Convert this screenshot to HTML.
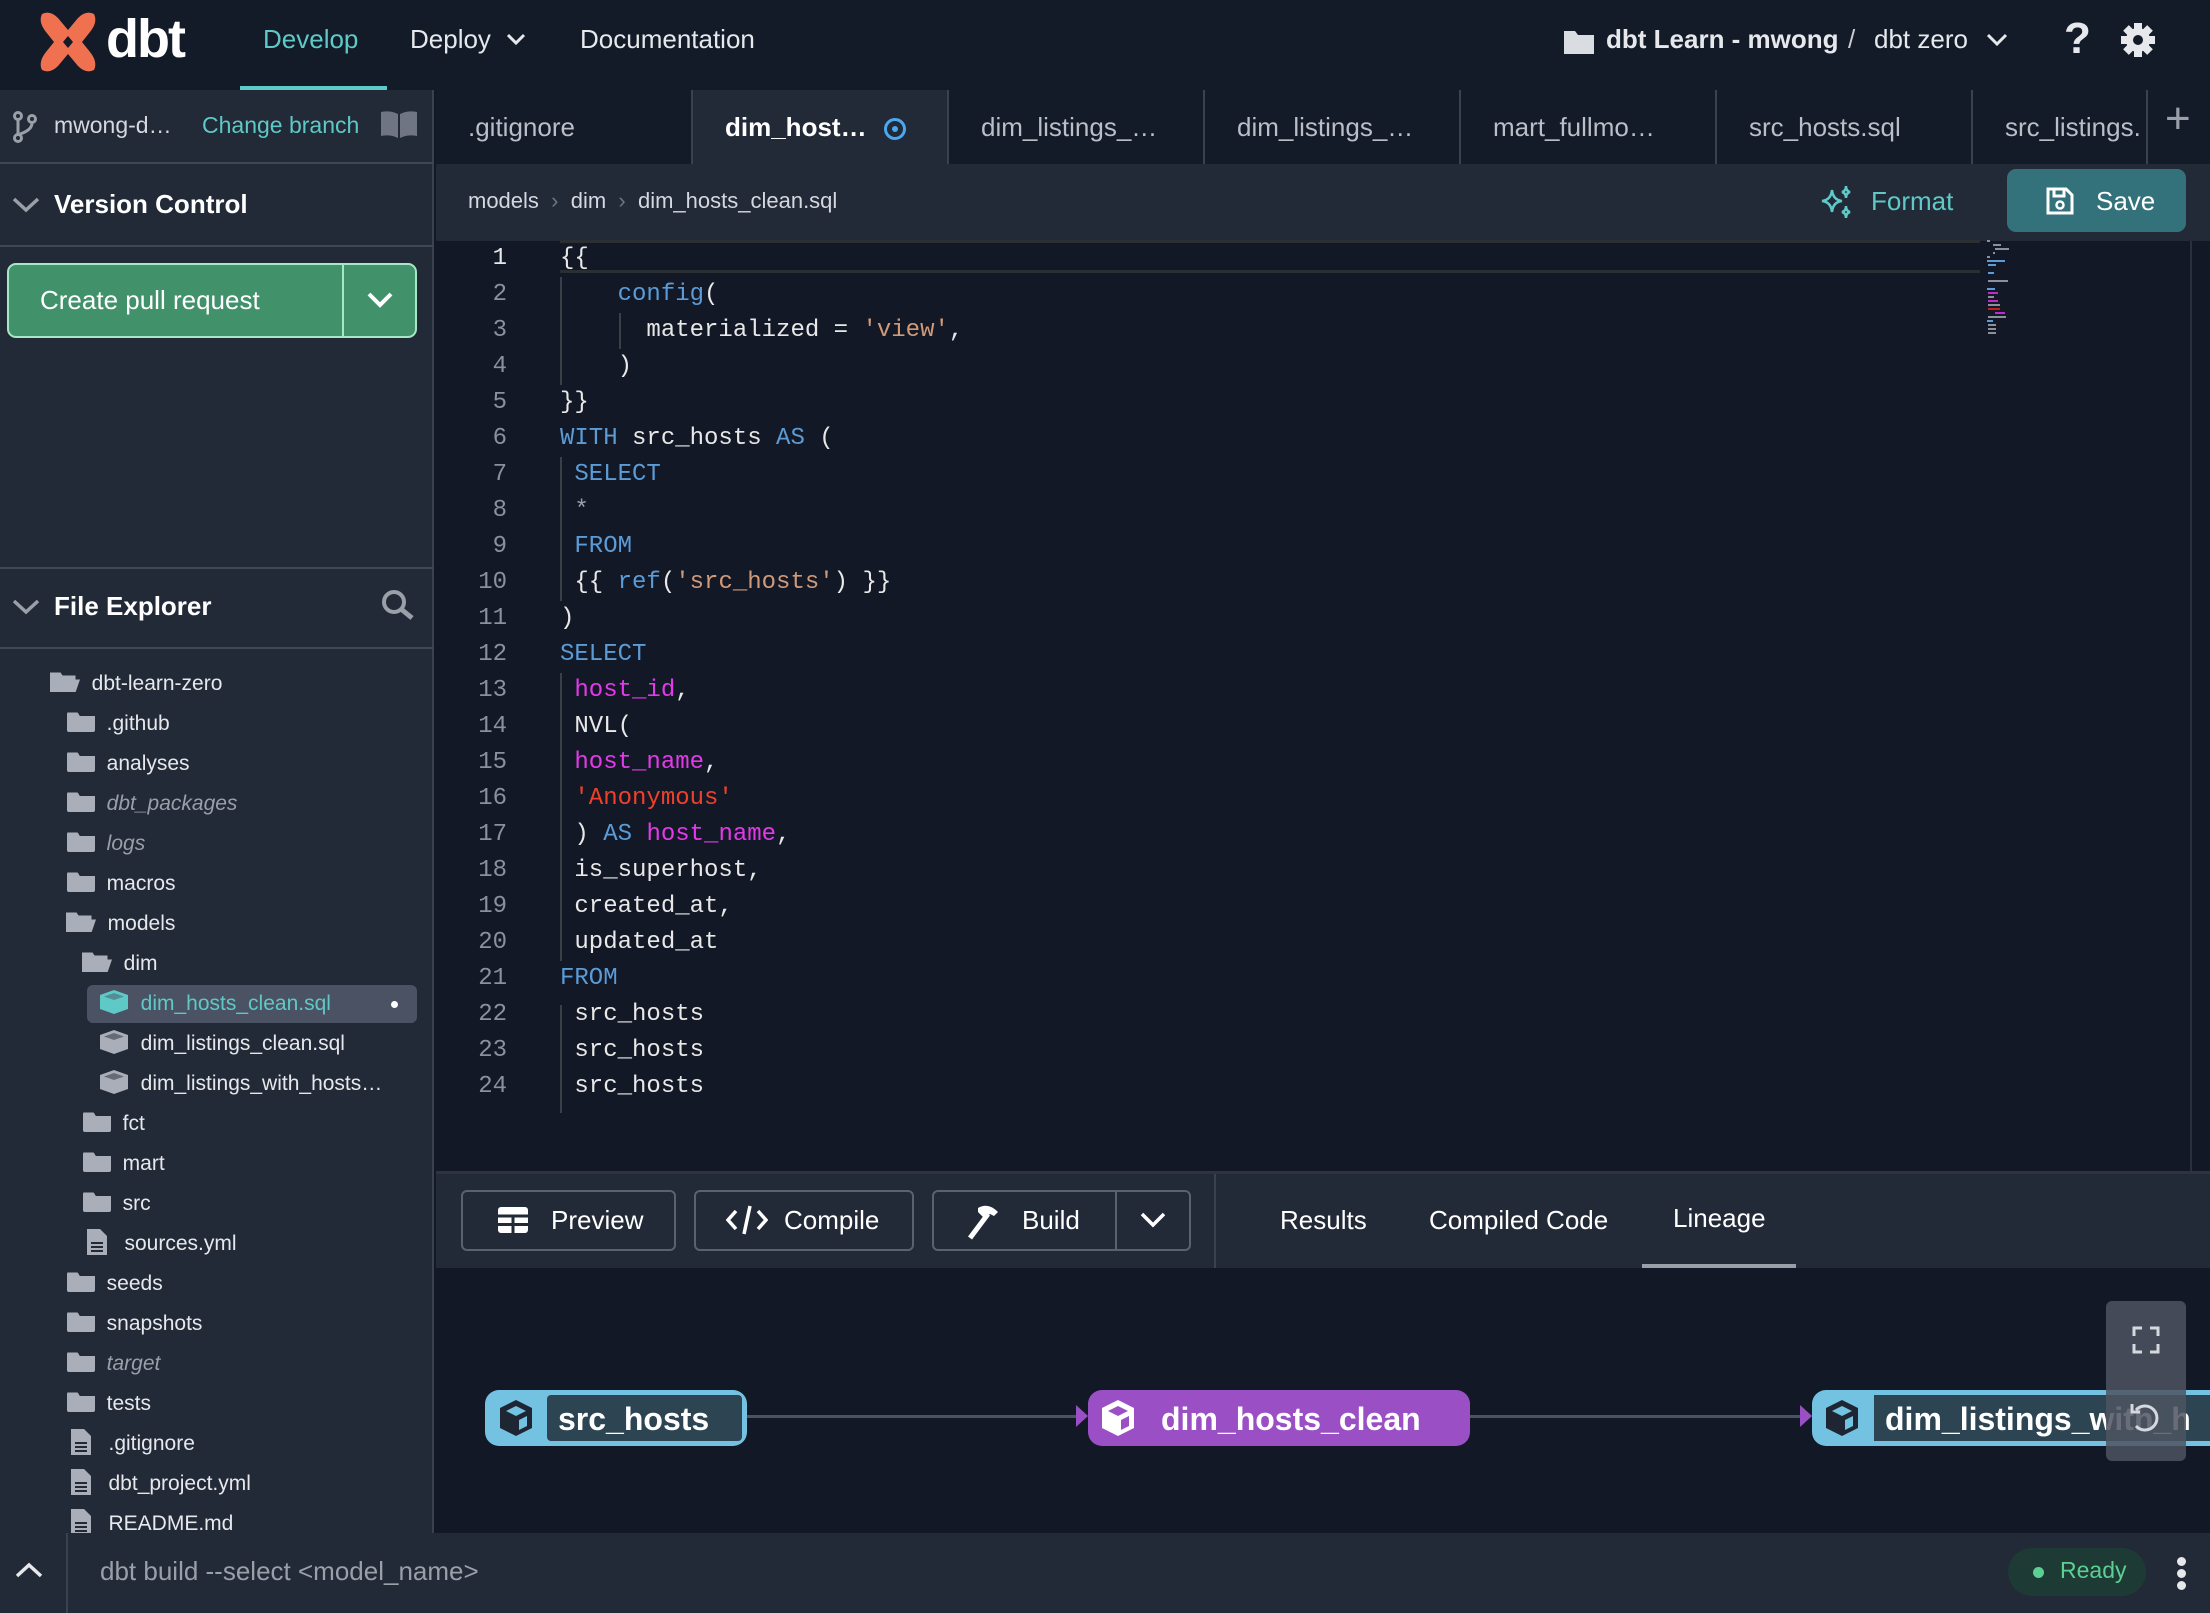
<!DOCTYPE html>
<html><head><meta charset="utf-8"><style>
*{box-sizing:border-box;margin:0;padding:0}
body{width:2210px;height:1613px;overflow:hidden;background:#131826;font-family:"Liberation Sans",sans-serif;color:#e6e8ec;position:relative}
.a{position:absolute}
.t{white-space:nowrap}
.ln{position:absolute;left:440px;width:67px;text-align:right;color:#8a909c;font-family:"Liberation Mono",monospace;font-size:24px;line-height:36px}
.cl{position:absolute;left:560px;line-height:36px;font-family:"Liberation Mono",monospace;font-size:24px;white-space:pre;color:#e8e8e8}
.k{color:#5b9bd6}.s{color:#d09a78}.p{color:#e23ae8}.r{color:#f0402a}.g{color:#9aa0a8}
.tab{position:absolute;top:90px;height:74px;width:256px;border-left:2px solid #3a4150;font-size:26px;color:#b9bec7;padding:22px 0 0 32px;white-space:nowrap;overflow:hidden}
.tr{position:absolute;font-size:21px;white-space:nowrap;color:#e6e8ec;height:40px;line-height:40px}
.fi{display:inline-block;width:28px;height:20px;background:#a9aeb8;vertical-align:middle;position:relative;top:-2px;clip-path:polygon(0 0,38% 0,46% 18%,100% 18%,100% 100%,0 100%);border-radius:2px}
.fo{display:inline-block;width:30px;height:20px;background:#a9aeb8;vertical-align:middle;position:relative;top:-2px;clip-path:polygon(0 0,35% 0,42% 15%,85% 15%,85% 35%,100% 35%,85% 100%,0 100%)}
.doc{display:inline-block;width:20px;height:26px;vertical-align:middle;position:relative;top:-2px}
.cube{display:inline-block;vertical-align:middle;position:relative;top:-2px}
.btn{position:absolute;top:1190px;height:61px;border:2px solid #5a6170;border-radius:6px;font-size:26px;color:#fff;line-height:57px}
</style></head><body>
<!-- top nav -->
<div class="a" style="left:0;top:0;width:2210px;height:90px;background:#131a28"></div>
<svg class="a" style="left:36px;top:10px" width="64" height="64" viewBox="0 0 64 64"><path d="M6 4 Q14 0 22 8 L32 20 L42 8 Q50 0 58 4 Q62 12 54 22 L46 32 L54 42 Q62 52 58 60 Q50 64 42 56 L32 44 L22 56 Q14 64 6 60 Q2 52 10 42 L18 32 L10 22 Q2 12 6 4Z" fill="#f0714f"/><path d="M32 26 L37 32 L32 38 L27 32Z" fill="#131a28"/></svg>
<div class="a t" style="left:106px;top:8px;font-size:54px;font-weight:bold;color:#fff;letter-spacing:-2px">dbt</div>
<div class="a t" style="left:263px;top:24px;font-size:26px;color:#5ec9c6">Develop</div>
<div class="a" style="left:240px;top:86px;width:147px;height:4px;background:#5ec9c6"></div>
<div class="a t" style="left:410px;top:24px;font-size:26px;color:#e6e8ec">Deploy</div>
<svg class="a" style="left:506px;top:32px" width="20" height="14"><path d="M2 3 L10 11 L18 3" stroke="#e6e8ec" stroke-width="3" fill="none"/></svg>
<div class="a t" style="left:580px;top:24px;font-size:26px;color:#e6e8ec">Documentation</div>
<svg class="a" style="left:1563px;top:27px" width="32" height="28"><path d="M1 4 h11 l3 4 h16 v19 h-30z" fill="#d9dce1"/></svg>
<div class="a t" style="left:1606px;top:24px;font-size:26px;color:#e6e8ec;font-weight:bold">dbt Learn - mwong</div>
<div class="a t" style="left:1848px;top:24px;font-size:26px;color:#c9ccd2">/</div>
<div class="a t" style="left:1874px;top:24px;font-size:26px;color:#e6e8ec">dbt zero</div>
<svg class="a" style="left:1986px;top:32px" width="22" height="16"><path d="M2 3 L11 12 L20 3" stroke="#e6e8ec" stroke-width="3" fill="none"/></svg>
<div class="a t" style="left:2064px;top:14px;font-size:44px;font-weight:bold;color:#e6e8ec">?</div>
<svg class="a" style="left:2120px;top:22px" width="36" height="36" viewBox="0 0 36 36"><g fill="#e6e8ec"><circle cx="18" cy="18" r="12"/><rect x="14" y="1" width="8" height="34"/><rect x="1" y="14" width="34" height="8"/><rect x="14" y="1" width="8" height="34" transform="rotate(45 18 18)"/><rect x="14" y="1" width="8" height="34" transform="rotate(-45 18 18)"/></g><circle cx="18" cy="18" r="5" fill="#131a28"/></svg>

<!-- sidebar -->
<div class="a" style="left:0;top:90px;width:434px;height:1443px;background:#222937;border-right:2px solid #3a4150"></div>
<svg class="a" style="left:12px;top:110px" width="26" height="34"><g stroke="#9aa0a8" stroke-width="3" fill="none"><circle cx="6" cy="6" r="3.5"/><circle cx="20" cy="9" r="3.5"/><circle cx="6" cy="28" r="3.5"/><path d="M6 10 V24 M20 13 Q20 20 8 24"/></g></svg>
<div class="a t" style="left:54px;top:112px;font-size:23px;color:#d5d8de">mwong-d…</div>
<div class="a t" style="left:202px;top:112px;font-size:23px;color:#5ec9c6">Change branch</div>
<svg class="a" style="left:380px;top:110px" width="38" height="30"><path d="M1 2 Q10 0 18 4 V28 Q10 24 1 26Z M20 4 Q28 0 37 2 V26 Q28 24 20 28Z" fill="#6f7582"/></svg>
<div class="a" style="left:0;top:162px;width:434px;height:2px;background:#3f4654"></div>
<svg class="a" style="left:12px;top:196px" width="28" height="18"><path d="M2 3 L14 14 L26 3" stroke="#9aa0a8" stroke-width="3.5" fill="none"/></svg>
<div class="a t" style="left:54px;top:189px;font-size:26px;font-weight:bold;color:#fff">Version Control</div>
<div class="a" style="left:0;top:245px;width:434px;height:2px;background:#3f4654"></div>
<div class="a" style="left:7px;top:263px;width:410px;height:75px;background:#41916a;border:2px solid #a6e8c4;border-radius:9px"></div>
<div class="a" style="left:342px;top:265px;width:2px;height:71px;background:#a6e8c4"></div>
<div class="a t" style="left:40px;top:285px;font-size:26px;color:#fff">Create pull request</div>
<svg class="a" style="left:366px;top:290px" width="28" height="20"><path d="M3 4 L14 15 L25 4" stroke="#fff" stroke-width="4" fill="none"/></svg>
<div class="a" style="left:0;top:567px;width:434px;height:2px;background:#3f4654"></div>
<svg class="a" style="left:12px;top:598px" width="28" height="18"><path d="M2 3 L14 14 L26 3" stroke="#9aa0a8" stroke-width="3.5" fill="none"/></svg>
<div class="a t" style="left:54px;top:591px;font-size:26px;font-weight:bold;color:#fff">File Explorer</div>
<svg class="a" style="left:380px;top:588px" width="36" height="34"><circle cx="14" cy="14" r="10" stroke="#9aa0a8" stroke-width="4" fill="none"/><path d="M21 21 L32 30" stroke="#9aa0a8" stroke-width="5"/></svg>
<div class="a" style="left:0;top:647px;width:434px;height:2px;background:#3f4654"></div>

<!-- tree -->
<div class="a" style="left:87px;top:985px;width:330px;height:38px;background:#4a5263;border-radius:6px"></div>
<div class="tr" style="left:50px;top:664px"><span class="fo"></span>&nbsp; dbt-learn-zero</div>
<div class="tr" style="left:67px;top:704px"><span class="fi"></span>&nbsp; .github</div>
<div class="tr" style="left:67px;top:744px"><span class="fi"></span>&nbsp; analyses</div>
<div class="tr" style="left:67px;top:784px;color:#9aa0a8;font-style:italic"><span class="fi"></span>&nbsp; dbt_packages</div>
<div class="tr" style="left:67px;top:824px;color:#9aa0a8;font-style:italic"><span class="fi"></span>&nbsp; logs</div>
<div class="tr" style="left:67px;top:864px"><span class="fi"></span>&nbsp; macros</div>
<div class="tr" style="left:66px;top:904px"><span class="fo"></span>&nbsp; models</div>
<div class="tr" style="left:82px;top:944px"><span class="fo"></span>&nbsp; dim</div>
<div class="tr" style="left:99px;top:984px;color:#5ec9c6"><svg class="cube" width="30" height="26" viewBox="0 0 30 26"><path d="M15 1 L29 6 V20 L15 25 L1 20 V6Z" fill="#5ec9c6"/><path d="M15 4 L25 7.5 L15 11 L5 7.5Z" fill="#4a5263" opacity=".5"/></svg>&nbsp; dim_hosts_clean.sql</div>
<div class="a" style="left:391px;top:1001px;width:7px;height:7px;border-radius:50%;background:#fff"></div>
<div class="tr" style="left:99px;top:1024px"><svg class="cube" width="30" height="26" viewBox="0 0 30 26"><path d="M15 1 L29 6 V20 L15 25 L1 20 V6Z" fill="#a9aeb8"/><path d="M15 4 L25 7.5 L15 11 L5 7.5Z" fill="#222937" opacity=".5"/></svg>&nbsp; dim_listings_clean.sql</div>
<div class="tr" style="left:99px;top:1064px"><svg class="cube" width="30" height="26" viewBox="0 0 30 26"><path d="M15 1 L29 6 V20 L15 25 L1 20 V6Z" fill="#a9aeb8"/><path d="M15 4 L25 7.5 L15 11 L5 7.5Z" fill="#222937" opacity=".5"/></svg>&nbsp; dim_listings_with_hosts…</div>
<div class="tr" style="left:83px;top:1104px"><span class="fi"></span>&nbsp; fct</div>
<div class="tr" style="left:83px;top:1144px"><span class="fi"></span>&nbsp; mart</div>
<div class="tr" style="left:83px;top:1184px"><span class="fi"></span>&nbsp; src</div>
<div class="tr" style="left:87px;top:1224px"><svg class="doc" viewBox="0 0 20 26"><path d="M0 0 H13 L20 7 V26 H0Z" fill="#a9aeb8"/><path d="M4 14h12M4 18h12M4 22h12" stroke="#222937" stroke-width="2"/></svg>&nbsp;&nbsp; sources.yml</div>
<div class="tr" style="left:67px;top:1264px"><span class="fi"></span>&nbsp; seeds</div>
<div class="tr" style="left:67px;top:1304px"><span class="fi"></span>&nbsp; snapshots</div>
<div class="tr" style="left:67px;top:1344px;color:#9aa0a8;font-style:italic"><span class="fi"></span>&nbsp; target</div>
<div class="tr" style="left:67px;top:1384px"><span class="fi"></span>&nbsp; tests</div>
<div class="tr" style="left:71px;top:1424px"><svg class="doc" viewBox="0 0 20 26"><path d="M0 0 H13 L20 7 V26 H0Z" fill="#a9aeb8"/><path d="M4 14h12M4 18h12M4 22h12" stroke="#222937" stroke-width="2"/></svg>&nbsp;&nbsp; .gitignore</div>
<div class="tr" style="left:71px;top:1464px"><svg class="doc" viewBox="0 0 20 26"><path d="M0 0 H13 L20 7 V26 H0Z" fill="#a9aeb8"/><path d="M4 14h12M4 18h12M4 22h12" stroke="#222937" stroke-width="2"/></svg>&nbsp;&nbsp; dbt_project.yml</div>
<div class="tr" style="left:71px;top:1504px"><svg class="doc" viewBox="0 0 20 26"><path d="M0 0 H13 L20 7 V26 H0Z" fill="#a9aeb8"/><path d="M4 14h12M4 18h12M4 22h12" stroke="#222937" stroke-width="2"/></svg>&nbsp;&nbsp; README.md</div>

<!-- tabs -->
<div class="a" style="left:436px;top:90px;width:1774px;height:74px;background:#131a28"></div>
<div class="tab" style="left:436px;border-left:none">.gitignore</div>
<div class="tab" style="left:691px;background:#222937;color:#fff;font-weight:bold">dim_host… <span style="display:inline-block;width:22px;height:22px;border:3px solid #4aa8f0;border-radius:50%;vertical-align:middle;position:relative;margin-left:10px"><span style="position:absolute;left:5px;top:5px;width:6px;height:6px;background:#4aa8f0;border-radius:50%"></span></span></div>
<div class="tab" style="left:947px">dim_listings_…</div>
<div class="tab" style="left:1203px">dim_listings_…</div>
<div class="tab" style="left:1459px">mart_fullmo…</div>
<div class="tab" style="left:1715px">src_hosts.sql</div>
<div class="tab" style="left:1971px;width:176px">src_listings.</div>
<div class="a" style="left:2146px;top:90px;width:2px;height:74px;background:#3a4150"></div>
<div class="a t" style="left:2165px;top:94px;font-size:44px;color:#9aa0a8">+</div>

<!-- breadcrumb -->
<div class="a" style="left:436px;top:164px;width:1774px;height:77px;background:#222937"></div>
<div class="a t" style="left:468px;top:188px;font-size:22px;color:#d5d8de">models <span style="color:#6f7582">&nbsp;›&nbsp;</span> dim <span style="color:#6f7582">&nbsp;›&nbsp;</span> dim_hosts_clean.sql</div>
<svg class="a" style="left:1818px;top:184px" width="36" height="36" viewBox="0 0 36 36"><path d="M14 6 Q15 16 24 17 Q15 18 14 28 Q13 18 4 17 Q13 16 14 6Z M28 2 Q28 7 32 8 Q28 9 28 14 Q28 9 24 8 Q28 7 28 2Z M28 22 Q28 27 32 28 Q28 29 28 34 Q28 29 24 28 Q28 27 28 22Z" stroke="#5ec9c6" stroke-width="2.5" fill="none"/></svg>
<div class="a t" style="left:1871px;top:186px;font-size:26px;color:#5ec9c6">Format</div>
<div class="a" style="left:2007px;top:169px;width:179px;height:63px;background:#33727a;border-radius:9px"></div>
<svg class="a" style="left:2045px;top:186px" width="30" height="30"><path d="M3 3 H21 L27 9 V27 H3Z" stroke="#fff" stroke-width="3" fill="none"/><path d="M9 3 V10 H19 V3" stroke="#fff" stroke-width="3" fill="none"/><circle cx="15" cy="19" r="3.5" stroke="#fff" stroke-width="2.5" fill="none"/></svg>
<div class="a t" style="left:2096px;top:186px;font-size:26px;color:#fff">Save</div>

<!-- editor -->
<div class="a" style="left:560px;top:240px;width:1420px;height:33px;border-top:3px solid #2b2e33;border-bottom:3px solid #2b2e33"></div>
<div class="a" style="left:2190px;top:241px;width:2px;height:930px;background:#2a303c"></div>
<div class="a" style="left:560px;top:277px;width:2px;height:108px;background:#3a3f48"></div>
<div class="a" style="left:619px;top:313px;width:2px;height:36px;background:#3a3f48"></div>
<div class="a" style="left:560px;top:457px;width:2px;height:144px;background:#3a3f48"></div>
<div class="a" style="left:560px;top:673px;width:2px;height:288px;background:#3a3f48"></div>
<div class="a" style="left:560px;top:1005px;width:2px;height:108px;background:#3a3f48"></div>

<div style="position:absolute;left:0;top:4px;width:2210px;height:1200px">
<div class="ln" style="top:237px;color:#e8e8e8">1</div><div class="cl" style="top:237px">{{</div>
<div class="ln" style="top:273px">2</div><div class="cl" style="top:273px">    <span class="k">config</span>(</div>
<div class="ln" style="top:309px">3</div><div class="cl" style="top:309px">      materialized = <span class="s">'view'</span>,</div>
<div class="ln" style="top:345px">4</div><div class="cl" style="top:345px">    )</div>
<div class="ln" style="top:381px">5</div><div class="cl" style="top:381px">}}</div>
<div class="ln" style="top:417px">6</div><div class="cl" style="top:417px"><span class="k">WITH</span> src_hosts <span class="k">AS</span> (</div>
<div class="ln" style="top:453px">7</div><div class="cl" style="top:453px"> <span class="k">SELECT</span></div>
<div class="ln" style="top:489px">8</div><div class="cl" style="top:489px"> <span class="g">*</span></div>
<div class="ln" style="top:525px">9</div><div class="cl" style="top:525px"> <span class="k">FROM</span></div>
<div class="ln" style="top:561px">10</div><div class="cl" style="top:561px"> {{ <span class="k">ref</span>(<span class="s">'src_hosts'</span>) }}</div>
<div class="ln" style="top:597px">11</div><div class="cl" style="top:597px">)</div>
<div class="ln" style="top:633px">12</div><div class="cl" style="top:633px"><span class="k">SELECT</span></div>
<div class="ln" style="top:669px">13</div><div class="cl" style="top:669px"> <span class="p">host_id</span>,</div>
<div class="ln" style="top:705px">14</div><div class="cl" style="top:705px"> NVL(</div>
<div class="ln" style="top:741px">15</div><div class="cl" style="top:741px"> <span class="p">host_name</span>,</div>
<div class="ln" style="top:777px">16</div><div class="cl" style="top:777px"> <span class="r">'Anonymous'</span></div>
<div class="ln" style="top:813px">17</div><div class="cl" style="top:813px"> ) <span class="k">AS</span> <span class="p">host_name</span>,</div>
<div class="ln" style="top:849px">18</div><div class="cl" style="top:849px"> is_superhost,</div>
<div class="ln" style="top:885px">19</div><div class="cl" style="top:885px"> created_at,</div>
<div class="ln" style="top:921px">20</div><div class="cl" style="top:921px"> updated_at</div>
<div class="ln" style="top:957px">21</div><div class="cl" style="top:957px"><span class="k">FROM</span></div>
<div class="ln" style="top:993px">22</div><div class="cl" style="top:993px"> src_hosts</div>
<div class="ln" style="top:1029px">23</div><div class="cl" style="top:1029px"> src_hosts</div>
<div class="ln" style="top:1065px">24</div><div class="cl" style="top:1065px"> src_hosts</div>
</div>
<!-- minimap -->
<svg class="a" style="left:1985px;top:238px" width="50" height="100"><g stroke-width="2"><path d="M2 3h3M8 7h8M10 11h14M8 15h2M2 19h3" stroke="#8a909c"/><path d="M2 23h18M3 27h8M3 35h6M2 51h8M2 83h6" stroke="#5b9bd6"/><path d="M3 43h20M3 59h6M3 67h12M3 79h18M3 87h8M3 91h8M3 95h8" stroke="#8a909c"/><path d="M3 55h10M3 63h10M10 75h10" stroke="#c02ac8"/><path d="M3 71h12" stroke="#c02020"/></g></svg>

<!-- toolbar -->
<div class="a" style="left:436px;top:1171px;width:1774px;height:3px;background:#2d3340"></div>
<div class="a" style="left:436px;top:1174px;width:1774px;height:94px;background:#222937"></div>
<div class="btn" style="left:461px;width:215px;padding-left:88px">Preview</div>
<svg class="a" style="left:497px;top:1206px" width="32" height="28"><rect x="1" y="1" width="30" height="26" rx="3" fill="#fff"/><path d="M1 10 H31 M16 10 V27 M1 18.5 H31" stroke="#222937" stroke-width="3"/></svg>
<div class="btn" style="left:694px;width:220px;padding-left:88px">Compile</div>
<svg class="a" style="left:726px;top:1204px" width="42" height="32"><path d="M10 7 L2 16 L10 25 M32 7 L40 16 L32 25 M24 2 L18 30" stroke="#fff" stroke-width="3.5" fill="none"/></svg>
<div class="btn" style="left:932px;width:259px;padding-left:88px">Build</div>
<div class="a" style="left:1115px;top:1192px;width:2px;height:57px;background:#5a6170"></div>
<svg class="a" style="left:964px;top:1202px" width="40" height="38"><path d="M6 36 L24 12" stroke="#fff" stroke-width="5"/><path d="M14 6 Q24 0 34 10 L30 14 L26 12 L20 16 L14 10Z" fill="#fff"/></svg>
<svg class="a" style="left:1139px;top:1211px" width="28" height="20"><path d="M3 3 L14 14 L25 3" stroke="#fff" stroke-width="3.5" fill="none"/></svg>
<div class="a" style="left:1214px;top:1174px;width:2px;height:94px;background:#3a4150"></div>
<div class="a t" style="left:1280px;top:1205px;font-size:26px;color:#fff">Results</div>
<div class="a t" style="left:1429px;top:1205px;font-size:26px;color:#fff">Compiled Code</div>
<div class="a t" style="left:1673px;top:1203px;font-size:26px;color:#fff">Lineage</div>
<div class="a" style="left:1642px;top:1264px;width:154px;height:4px;background:#9aa0a8"></div>

<!-- lineage -->
<div class="a" style="left:746px;top:1415px;width:330px;height:3px;background:#4a5263"></div>
<div class="a" style="left:1470px;top:1415px;width:334px;height:3px;background:#4a5263"></div>
<svg class="a" style="left:1076px;top:1405px" width="12" height="22"><path d="M0 0 L12 11 L0 22Z" fill="#9b4fc4"/></svg>
<svg class="a" style="left:1800px;top:1405px" width="12" height="22"><path d="M0 0 L12 11 L0 22Z" fill="#9b4fc4"/></svg>
<div class="a" style="left:485px;top:1390px;width:262px;height:56px;background:#74c2e2;border-radius:14px"></div>
<div class="a" style="left:547px;top:1395px;width:195px;height:46px;background:#2d4552;border-radius:4px"></div>
<svg class="a" style="left:496px;top:1398px" width="40" height="40" viewBox="0 0 40 40"><path d="M20 2 L36 10 V30 L20 38 L4 30 V10Z" fill="#1e2633"/><path d="M20 8 L30 13 L20 18 L10 13Z M23 22 L31 18 V28 L23 32Z" fill="#74c2e2"/></svg>
<div class="a t" style="left:558px;top:1401px;font-size:32px;font-weight:bold;color:#fff">src_hosts</div>
<div class="a" style="left:1088px;top:1390px;width:382px;height:56px;background:#9b4fc4;border-radius:14px"></div>
<svg class="a" style="left:1098px;top:1398px" width="40" height="40" viewBox="0 0 40 40"><path d="M20 2 L36 10 V30 L20 38 L4 30 V10Z" fill="#fff"/><path d="M20 8 L30 13 L20 18 L10 13Z M23 22 L31 18 V28 L23 32Z" fill="#9b4fc4"/></svg>
<div class="a t" style="left:1161px;top:1401px;font-size:32px;font-weight:bold;color:#fff">dim_hosts_clean</div>
<div class="a" style="left:1812px;top:1390px;width:420px;height:56px;background:#74c2e2;border-radius:14px"></div>
<div class="a" style="left:1874px;top:1395px;width:340px;height:46px;background:#2d4552"></div>
<svg class="a" style="left:1822px;top:1398px" width="40" height="40" viewBox="0 0 40 40"><path d="M20 2 L36 10 V30 L20 38 L4 30 V10Z" fill="#1e2633"/><path d="M20 8 L30 13 L20 18 L10 13Z M23 22 L31 18 V28 L23 32Z" fill="#74c2e2"/></svg>
<div class="a t" style="left:1885px;top:1401px;font-size:32px;font-weight:bold;color:#fff">dim_listings_with_h</div>
<div class="a" style="left:2106px;top:1301px;width:80px;height:160px;background:rgba(78,84,96,0.85);border-radius:6px"></div>
<svg class="a" style="left:2132px;top:1326px" width="28" height="28"><path d="M2 10 V2 H10 M18 2 H26 V10 M26 18 V26 H18 M10 26 H2 V18" stroke="#d5d8de" stroke-width="3" fill="none"/></svg>
<svg class="a" style="left:2128px;top:1400px" width="36" height="36"><path d="M8 10 A12 12 0 1 1 8 26" stroke="#d5d8de" stroke-width="3" fill="none"/><path d="M4 4 V12 H12" stroke="#d5d8de" stroke-width="3" fill="none"/></svg>

<!-- bottom bar -->
<div class="a" style="left:0;top:1533px;width:2210px;height:80px;background:#222937"></div>
<svg class="a" style="left:14px;top:1560px" width="30" height="20"><path d="M3 16 L15 5 L27 16" stroke="#e6e8ec" stroke-width="3.5" fill="none"/></svg>
<div class="a" style="left:66px;top:1533px;width:2px;height:80px;background:#3a4150"></div>
<div class="a t" style="left:100px;top:1556px;font-size:26px;color:#9aa0a8">dbt build --select &lt;model_name&gt;</div>
<div class="a" style="left:2008px;top:1548px;width:138px;height:48px;background:#1e3a35;border-radius:24px"></div>
<div class="a" style="left:2033px;top:1567px;width:11px;height:11px;background:#5ccf94;border-radius:50%"></div>
<div class="a t" style="left:2060px;top:1557px;font-size:23px;color:#5ccf94">Ready</div>
<div class="a" style="left:2177px;top:1557px;width:9px;height:9px;background:#e6e8ec;border-radius:50%"></div>
<div class="a" style="left:2177px;top:1569px;width:9px;height:9px;background:#e6e8ec;border-radius:50%"></div>
<div class="a" style="left:2177px;top:1581px;width:9px;height:9px;background:#e6e8ec;border-radius:50%"></div>
</body></html>
